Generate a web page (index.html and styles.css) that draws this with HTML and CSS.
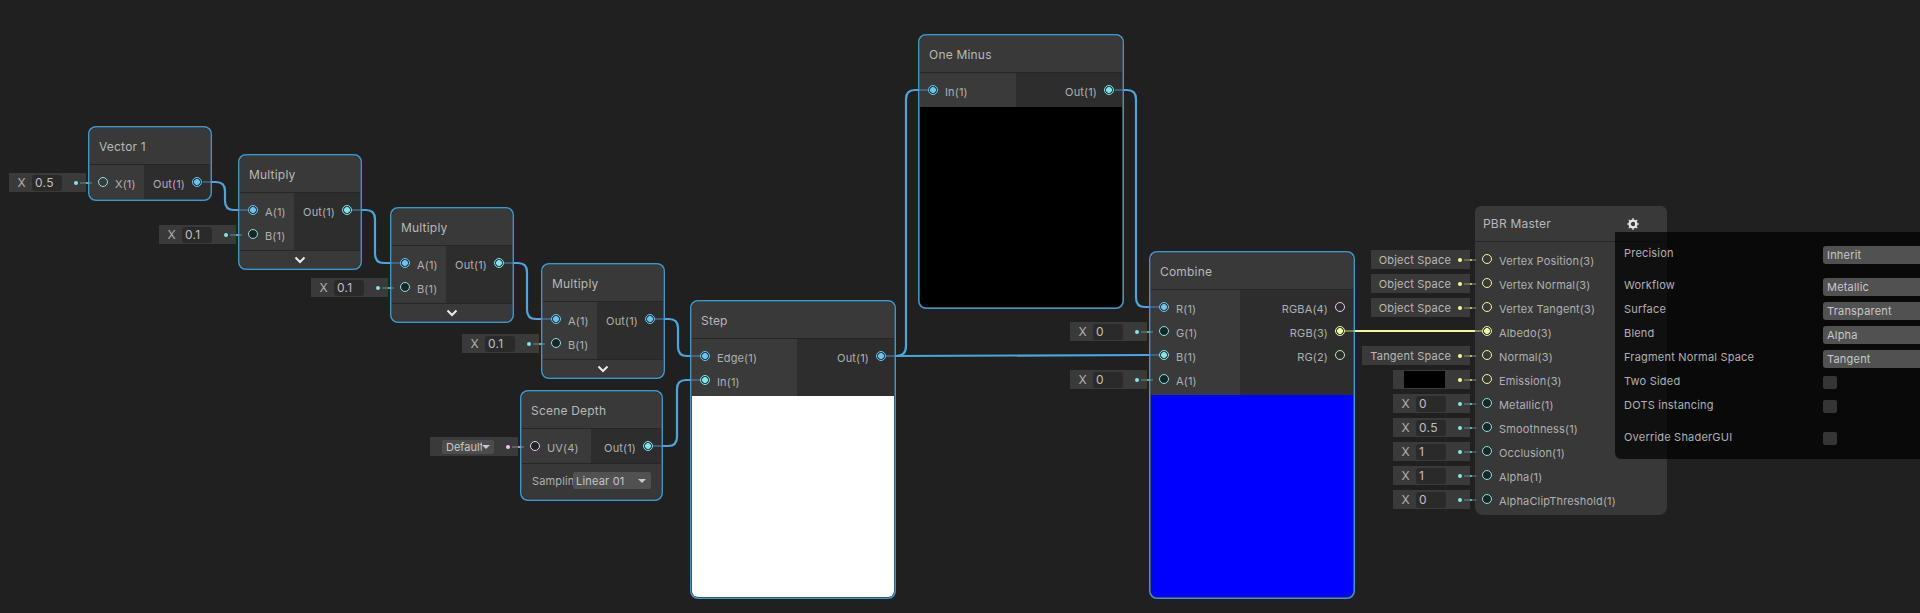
FILE: index.html
```html
<!DOCTYPE html>
<html lang="en">
<head>
    <meta charset="UTF-8">
    <meta name="viewport" content="width=device-width, initial-scale=1.0">
    <title>Shader Graph</title>
    <link rel="stylesheet" href="styles.css">
</head>
<body>
    <div class="graph">

        <div class="node selected node-vector">
            <div class="node-title">Vector 1</div>
            <div class="slots slots-single">
                <div class="inputs">
                    <div class="slot tint-float">
                        <span class="default"><span class="axis">X</span><span class="field">0.5</span></span>
                        <i class="port"></i><span class="label">X(1)</span>
                    </div>
                </div>
                <div class="outputs">
                    <div class="slot slot-out tint-blue"><span class="label">Out(1)</span><i class="port port-on"></i></div>
                </div>
            </div>
        </div>

        <div class="node selected node-mul1">
            <div class="node-title">Multiply</div>
            <div class="slots">
                <div class="inputs">
                    <div class="slot tint-blue"><i class="port port-on"></i><span class="label">A(1)</span></div>
                    <div class="slot tint-float">
                        <span class="default"><span class="axis">X</span><span class="field">0.1</span></span>
                        <i class="port port-dark"></i><span class="label">B(1)</span>
                    </div>
                </div>
                <div class="outputs">
                    <div class="slot slot-out tint-float"><span class="label">Out(1)</span><i class="port port-on"></i></div>
                </div>
            </div>
            <div class="collapse"><svg width="12" height="8" viewBox="0 0 12 8"><polyline points="1.5,1.5 6,6 10.5,1.5"/></svg></div>
        </div>

        <div class="node selected node-mul2">
            <div class="node-title">Multiply</div>
            <div class="slots">
                <div class="inputs">
                    <div class="slot tint-blue"><i class="port port-on"></i><span class="label">A(1)</span></div>
                    <div class="slot tint-float">
                        <span class="default"><span class="axis">X</span><span class="field">0.1</span></span>
                        <i class="port port-dark"></i><span class="label">B(1)</span>
                    </div>
                </div>
                <div class="outputs">
                    <div class="slot slot-out tint-float"><span class="label">Out(1)</span><i class="port port-on"></i></div>
                </div>
            </div>
            <div class="collapse"><svg width="12" height="8" viewBox="0 0 12 8"><polyline points="1.5,1.5 6,6 10.5,1.5"/></svg></div>
        </div>

        <div class="node selected node-mul3">
            <div class="node-title">Multiply</div>
            <div class="slots">
                <div class="inputs">
                    <div class="slot tint-blue"><i class="port port-on"></i><span class="label">A(1)</span></div>
                    <div class="slot tint-float">
                        <span class="default"><span class="axis">X</span><span class="field">0.1</span></span>
                        <i class="port port-dark"></i><span class="label">B(1)</span>
                    </div>
                </div>
                <div class="outputs">
                    <div class="slot slot-out tint-blue"><span class="label">Out(1)</span><i class="port port-on"></i></div>
                </div>
            </div>
            <div class="collapse"><svg width="12" height="8" viewBox="0 0 12 8"><polyline points="1.5,1.5 6,6 10.5,1.5"/></svg></div>
        </div>

        <div class="node selected node-step">
            <div class="node-title">Step</div>
            <div class="slots">
                <div class="inputs">
                    <div class="slot tint-blue"><i class="port port-on"></i><span class="label">Edge(1)</span></div>
                    <div class="slot tint-float"><i class="port port-on"></i><span class="label">In(1)</span></div>
                </div>
                <div class="outputs">
                    <div class="slot slot-out tint-blue"><span class="label">Out(1)</span><i class="port port-on"></i></div>
                </div>
            </div>
            <div class="preview preview-white"></div>
        </div>

        <div class="node selected node-depth">
            <div class="node-title">Scene Depth</div>
            <div class="slots slots-single">
                <div class="inputs">
                    <div class="slot tint-uv">
                        <span class="default default-uv"><span class="select-mini"><span class="select-mini-text">Default</span><i class="caret"></i></span></span>
                        <i class="port port-dark"></i><span class="label">UV(4)</span>
                    </div>
                </div>
                <div class="outputs">
                    <div class="slot slot-out tint-float"><span class="label">Out(1)</span><i class="port port-on"></i></div>
                </div>
            </div>
            <div class="control-row">
                <span class="control-label">Sampling</span>
                <span class="control-select">Linear 01<i class="caret"></i></span>
            </div>
        </div>

        <div class="node selected node-minus">
            <div class="node-title">One Minus</div>
            <div class="slots slots-single">
                <div class="inputs">
                    <div class="slot tint-blue"><i class="port port-on"></i><span class="label">In(1)</span></div>
                </div>
                <div class="outputs">
                    <div class="slot slot-out tint-float"><span class="label">Out(1)</span><i class="port port-on"></i></div>
                </div>
            </div>
            <div class="preview preview-black"></div>
        </div>

        <div class="node selected node-combine">
            <div class="node-title">Combine</div>
            <div class="slots">
                <div class="inputs">
                    <div class="slot tint-blue"><i class="port port-on"></i><span class="label">R(1)</span></div>
                    <div class="slot tint-float">
                        <span class="default"><span class="axis">X</span><span class="field">0</span></span>
                        <i class="port port-dark"></i><span class="label">G(1)</span>
                    </div>
                    <div class="slot tint-float"><i class="port port-on"></i><span class="label">B(1)</span></div>
                    <div class="slot tint-float">
                        <span class="default"><span class="axis">X</span><span class="field">0</span></span>
                        <i class="port port-dark"></i><span class="label">A(1)</span>
                    </div>
                </div>
                <div class="outputs">
                    <div class="slot slot-out tint-uv"><span class="label">RGBA(4)</span><i class="port"></i></div>
                    <div class="slot slot-out tint-vec3"><span class="label">RGB(3)</span><i class="port port-on"></i></div>
                    <div class="slot slot-out tint-vec2"><span class="label">RG(2)</span><i class="port"></i></div>
                </div>
            </div>
            <div class="preview preview-blue"></div>
        </div>

        <div class="node node-pbr">
            <div class="node-title">PBR Master
                <svg class="gear" width="12" height="12" viewBox="0 0 12 12">
                    <circle cx="6" cy="6" r="3.4" fill="none" stroke="#e6e6e6" stroke-width="2.4"/>
                    <path d="M6 0v2M6 10v2M0 6h2M10 6h2M1.8 1.8l1.3 1.3M8.9 8.9l1.3 1.3M1.8 10.2l1.3-1.3M8.9 3.1l1.3-1.3" stroke="#e6e6e6" stroke-width="1.2"/>
                </svg>
            </div>
            <div class="slots">
                <div class="inputs">
                    <div class="slot tint-vec3">
                        <span class="default"><span class="space">Object Space</span></span>
                        <i class="port"></i><span class="label">Vertex Position(3)</span>
                    </div>
                    <div class="slot tint-vec3">
                        <span class="default"><span class="space">Object Space</span></span>
                        <i class="port"></i><span class="label">Vertex Normal(3)</span>
                    </div>
                    <div class="slot tint-vec3">
                        <span class="default"><span class="space">Object Space</span></span>
                        <i class="port"></i><span class="label">Vertex Tangent(3)</span>
                    </div>
                    <div class="slot tint-vec3"><i class="port port-on"></i><span class="label">Albedo(3)</span></div>
                    <div class="slot tint-vec3">
                        <span class="default"><span class="space">Tangent Space</span></span>
                        <i class="port"></i><span class="label">Normal(3)</span>
                    </div>
                    <div class="slot tint-vec3">
                        <span class="default"><span class="swatch"></span></span>
                        <i class="port"></i><span class="label">Emission(3)</span>
                    </div>
                    <div class="slot tint-float">
                        <span class="default"><span class="axis">X</span><span class="field">0</span></span>
                        <i class="port port-dark"></i><span class="label">Metallic(1)</span>
                    </div>
                    <div class="slot tint-float">
                        <span class="default"><span class="axis">X</span><span class="field">0.5</span></span>
                        <i class="port port-dark"></i><span class="label">Smoothness(1)</span>
                    </div>
                    <div class="slot tint-float">
                        <span class="default"><span class="axis">X</span><span class="field">1</span></span>
                        <i class="port port-dark"></i><span class="label">Occlusion(1)</span>
                    </div>
                    <div class="slot tint-float">
                        <span class="default"><span class="axis">X</span><span class="field">1</span></span>
                        <i class="port port-dark"></i><span class="label">Alpha(1)</span>
                    </div>
                    <div class="slot tint-float">
                        <span class="default"><span class="axis">X</span><span class="field">0</span></span>
                        <i class="port port-dark"></i><span class="label">AlphaClipThreshold(1)</span>
                    </div>
                </div>
            </div>
        </div>

        <!-- edges, on top of the nodes so the faded stubs show -->
        <svg class="wires" width="1920" height="613" viewBox="0 0 1920 613">
            <g class="wire">
                <path d="M212 182H216Q225 182 225 191V201Q225 210 234 210H238"/>
                <path d="M362 210H366Q375 210 375 219V254Q375 263 384 263H390"/>
                <path d="M514 263H518Q527 263 527 272V310Q527 319 536 319H541"/>
                <path d="M665 319H669Q678 319 678 328V347Q678 356 687 356H690"/>
                <path d="M663 446H668Q677 446 677 437V389Q677 380 686 380H690"/>
                <path d="M896 356Q906 356 906 346V99Q906 90 915 90H918"/>
                <path d="M896 356L1149 355"/>
                <path d="M1124 90H1127Q1136 90 1136 99V298Q1136 307 1145 307H1149"/>
            </g>
            <g class="wire wire-yellow">
                <path d="M1355 331H1475"/>
            </g>
            <g class="stub">
                <path d="M203 182H212M238 210H248M352 210H362M390 263H400M504 263H514M541 319H551M655 319H665"/>
                <path d="M690 356H700M690 380H700M886 356H896M653 446H663M918 90H928M1115 90H1124"/>
                <path d="M1149 307H1159M1149 355H1159"/>
            </g>
            <g class="stub stub-yellow">
                <path d="M1345 331H1355M1475 331H1482"/>
            </g>
        </svg>

        <div class="settings">
            <div class="setting"><span class="setting-name">Precision</span><span class="setting-select">Inherit</span></div>
            <div class="setting setting-gap"><span class="setting-name">Workflow</span><span class="setting-select">Metallic</span></div>
            <div class="setting"><span class="setting-name">Surface</span><span class="setting-select">Transparent</span></div>
            <div class="setting"><span class="setting-name">Blend</span><span class="setting-select">Alpha</span></div>
            <div class="setting"><span class="setting-name">Fragment Normal Space</span><span class="setting-select">Tangent</span></div>
            <div class="setting"><span class="setting-name">Two Sided</span><span class="setting-check"></span></div>
            <div class="setting"><span class="setting-name">DOTS instancing</span><span class="setting-check"></span></div>
            <div class="setting setting-gap"><span class="setting-name">Override ShaderGUI</span><span class="setting-check"></span></div>
        </div>

    </div>
</body>
</html>
```

FILE: styles.css
```css
body {
    margin: 0;
    background-color: #202020;
    font-family: Inter, "Noto Sans", sans-serif;
    font-size: 11px;
    color: #b0b0b0;
    overflow: hidden;
}
.graph {
    position: relative;
    width: 1920px;
    height: 613px;
    overflow: hidden;
}

/* nodes sit on a free canvas */
.node {
    position: absolute;
    box-sizing: border-box;
    border-radius: 8px;
    background-color: #383838;
}
.node.selected {
    padding: 2px;
    background-color: #1c2022;
    box-shadow: inset 0 0 0 1.5px #4595c6;
}
.node-vector { left: 88px; top: 126px; width: 124px; }
.node-mul1 { left: 238px; top: 154px; width: 124px; }
.node-mul2 { left: 390px; top: 207px; width: 124px; }
.node-mul3 { left: 541px; top: 263px; width: 124px; }
.node-step { left: 690px; top: 300px; width: 206px; }
.node-depth { left: 520px; top: 390px; width: 143px; }
.node-minus { left: 918px; top: 34px; width: 206px; }
.node-combine { left: 1149px; top: 251px; width: 206px; }
.node-pbr { left: 1475px; top: 206px; width: 192px; height: 309px; }

.node-title {
    box-sizing: border-box;
    display: flex;
    align-items: center;
    justify-content: space-between;
    height: 37px;
    padding: 0 9px;
    font-size: 12px;
    letter-spacing: 0.2px;
    color: #b8b8b8;
    background-color: #393939;
    border-bottom: 1px solid #262626;
    border-radius: 6px 6px 0 0;
}
.node-pbr .node-title {
    height: 36px;
    padding: 0 8px;
}
.gear {
    margin-right: 20px;
}

.slots {
    display: flex;
    align-items: stretch;
}
.inputs {
    box-sizing: border-box;
    width: 54px;
    padding: 5px 0 4px;
    background-color: #3a3a3a;
}
.outputs {
    box-sizing: border-box;
    flex: 1;
    padding: 5px 0 4px;
    background-color: #2d2d2d;
}
.slots-single .inputs,
.slots-single .outputs {
    padding-bottom: 5px;
}
.node-vector .inputs { border-bottom-left-radius: 6px; }
.node-vector .outputs { border-bottom-right-radius: 6px; }
.node-step .inputs { width: 105px; }
.node-depth .inputs { width: 69px; }
.node-minus .inputs { width: 96px; }
.node-combine .inputs { width: 89px; }
.node-pbr .inputs {
    width: 100%;
    background-color: transparent;
}
.node-pbr .slot { margin-left: -1px; }

.slot {
    position: relative;
    display: flex;
    align-items: center;
    gap: 7px;
    height: 24px;
    padding-left: 8px;
}
.slot-out {
    justify-content: flex-end;
    gap: 7px;
    padding: 0 8px 0 0;
}
.label {
    padding-top: 3px;
    letter-spacing: 0.15px;
    white-space: nowrap;
}
.tint-float { --tint: #84e4e7; }
.tint-blue { --tint: #6cc4ee; }
.tint-vec3 { --tint: #f6f6a0; }
.tint-vec2 { --tint: #b8eeb0; }
.tint-uv { --tint: #f1c8ee; }

.port {
    box-sizing: border-box;
    display: block;
    flex: none;
    width: 10px;
    height: 10px;
    border: 1.5px solid var(--tint);
    border-radius: 50%;
}
.port-on {
    background: radial-gradient(circle, var(--tint) 0 2.6px, #20343c 3.2px);
}
.port-dark {
    background-color: #1c2526;
}

/* default value widget left of an input slot */
.default {
    position: absolute;
    top: 3px;
    right: calc(100% + 4px);
    box-sizing: border-box;
    display: flex;
    align-items: center;
    height: 19px;
    min-width: 77px;
    padding-right: 19px;
    background-color: #3a3a3a;
}
.default::after {
    content: "";
    position: absolute;
    top: 7.5px;
    right: 8px;
    width: 4px;
    height: 4px;
    border-radius: 50%;
    background-color: var(--tint);
}
.default::before {
    content: "";
    position: absolute;
    top: 8.5px;
    left: 100%;
    width: 12px;
    height: 2px;
    margin-left: -6px;
    background: linear-gradient(to right,
        color-mix(in srgb, var(--tint) 25%, transparent) 0 6px,
        color-mix(in srgb, var(--tint) 70%, transparent) 6px 8px,
        color-mix(in srgb, var(--tint) 25%, transparent) 8px);
}
.axis {
    box-sizing: border-box;
    width: 23px;
    padding-left: 2px;
    text-align: center;
    font-size: 12px;
    color: #b0b0b0;
}
.field {
    box-sizing: border-box;
    width: 30px;
    height: 16px;
    line-height: 16px;
    padding-left: 3px;
    font-size: 12px;
    letter-spacing: 0.3px;
    color: #c0c0c0;
    background-color: #2a2a2a;
    border-radius: 3px;
}
.space {
    padding-left: 8px;
    white-space: nowrap;
    letter-spacing: 0.2px;
    color: #b8b8b8;
}
.swatch {
    width: 41px;
    height: 17px;
    margin-left: 11px;
    background-color: #000;
}
.default-uv {
    min-width: 88px;
    padding-left: 12px;
}
.select-mini {
    box-sizing: border-box;
    display: flex;
    align-items: center;
    width: 52px;
    height: 14px;
    padding-left: 4px;
    background-color: #4c4c4c;
    color: #c8c8c8;
    border-radius: 2px;
}
.select-mini-text {
    width: 35.5px;
    overflow: hidden;
    white-space: nowrap;
}
.caret {
    display: block;
    flex: none;
    width: 0;
    height: 0;
    border-left: 4px solid transparent;
    border-right: 4px solid transparent;
    border-top: 4px solid #c8c8c8;
}

.collapse {
    box-sizing: border-box;
    display: flex;
    align-items: center;
    justify-content: center;
    height: 18px;
    background-color: #393939;
    border-top: 1px solid #262626;
    border-radius: 0 0 6px 6px;
}
.collapse polyline {
    fill: none;
    stroke: #ececec;
    stroke-width: 2;
}

.control-row {
    box-sizing: border-box;
    display: flex;
    align-items: center;
    height: 36px;
    padding: 0 10px 2px 10px;
    background-color: #383838;
    border-top: 1px solid #262626;
    border-radius: 0 0 6px 6px;
}
.control-label {
    flex: none;
    width: 41px;
    overflow: hidden;
    white-space: nowrap;
    letter-spacing: 0.15px;
}
.control-select {
    flex: 1;
    box-sizing: border-box;
    display: flex;
    align-items: center;
    justify-content: space-between;
    height: 17px;
    padding: 0 5px 0 3px;
    letter-spacing: 0.2px;
    color: #c8c8c8;
    background-color: #515151;
    border-radius: 2px;
}

.preview {
    height: 201px;
    border-radius: 0 0 6px 6px;
}
.preview-white { background-color: #fff; }
.preview-black { background-color: #000; height: 200px; }
.preview-blue { background-color: #00f; height: 202px; }

.wires {
    position: absolute;
    left: 0;
    top: 0;
    pointer-events: none;
}
.wire path {
    fill: none;
    stroke: #4ba6dc;
    stroke-width: 2.2;
}
.wire-yellow path {
    stroke: #f6f6a0;
    stroke-width: 2;
}
.stub path {
    fill: none;
    stroke: #4ba6dc;
    stroke-width: 2;
    opacity: 0.4;
}
.stub-yellow path { stroke: #f6f6a0; }

/* node settings popup */
.settings {
    position: absolute;
    left: 1615px;
    top: 232px;
    box-sizing: border-box;
    width: 305px;
    height: 227px;
    padding: 9px 0 0 9px;
    background-color: rgba(0, 0, 0, 0.7);
    border-radius: 0 0 0 6px;
}
.setting {
    display: flex;
    align-items: center;
    height: 24px;
}
.setting-gap { margin-top: 8px; }
.setting-name {
    width: 199px;
    flex: none;
    letter-spacing: 0.2px;
    color: #b0b0b0;
}
.setting-select {
    box-sizing: border-box;
    width: 150px;
    flex: none;
    height: 18px;
    line-height: 18px;
    margin-top: 4px;
    padding-left: 4px;
    letter-spacing: 0.2px;
    color: #c8c8c8;
    background-color: #515151;
    border-radius: 3px;
}
.setting-check {
    width: 14px;
    height: 13px;
    margin-top: 3px;
    background-color: #353535;
    border-radius: 2px;
}
```
